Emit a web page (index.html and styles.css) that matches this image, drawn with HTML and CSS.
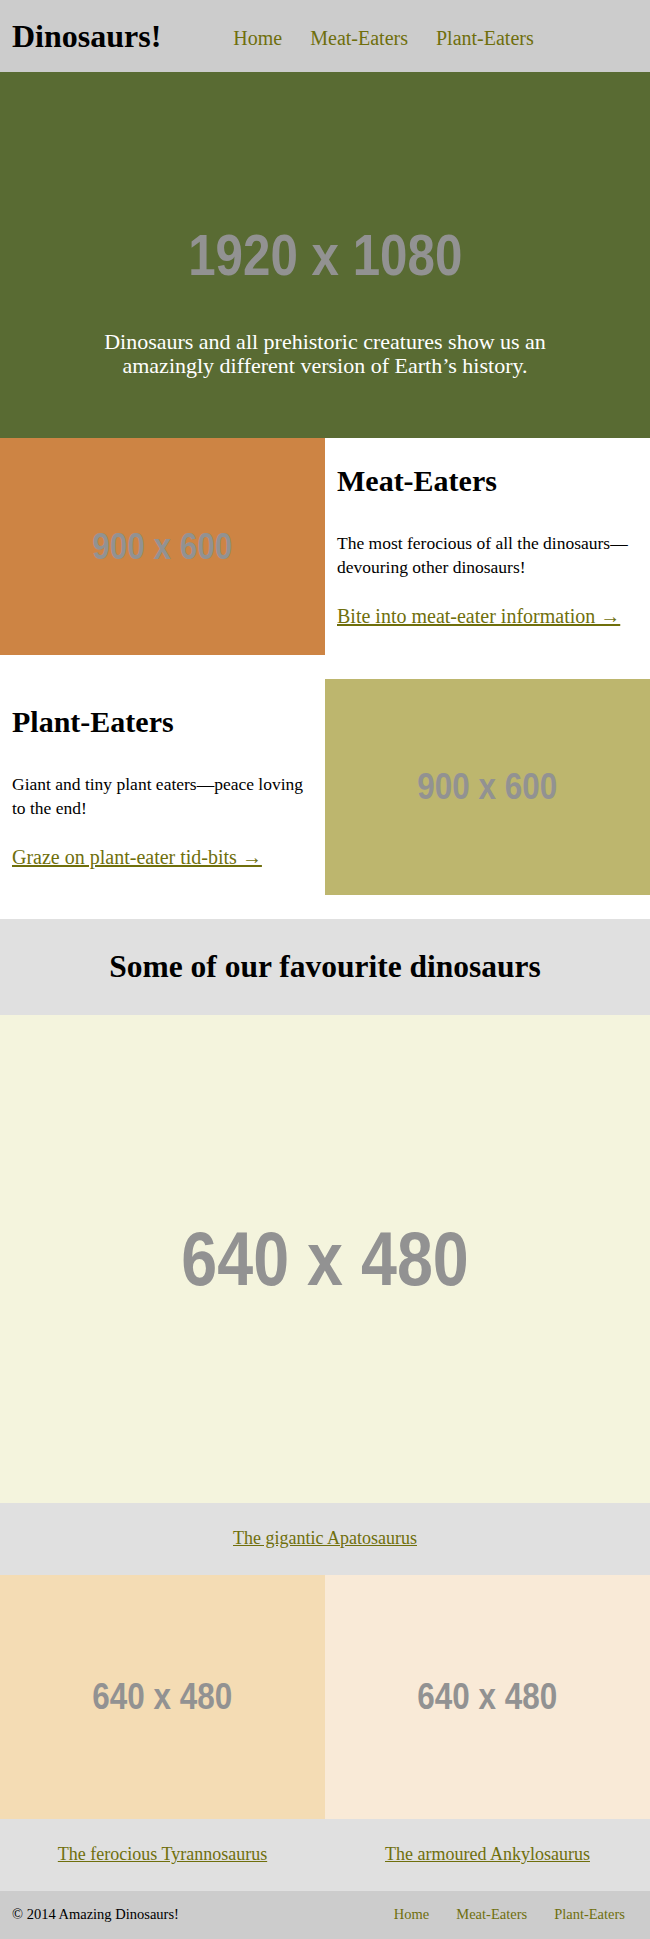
FILE: index.html
```html
<!DOCTYPE html>
<html lang="en">
<head>
<meta charset="utf-8">
<title>Dinosaurs!</title>
<link rel="stylesheet" href="styles.css">
</head>
<body>
<header class="site-header">
  <h1 class="logo">Dinosaurs!</h1>
  <nav class="main-nav">
    <a href="#">Home</a>
    <a href="#">Meat-Eaters</a>
    <a href="#">Plant-Eaters</a>
  </nav>
</header>

<section class="hero">
  <div class="ph ph-hero"><span>1920 x 1080</span></div>
  <p class="hero-caption">Dinosaurs and all prehistoric creatures show us an amazingly different version of Earth’s history.</p>
</section>

<section class="feature">
  <div class="ph ph-feature ph-orange"><span>900 x 600</span></div>
  <div class="feature-text">
    <h2>Meat-Eaters</h2>
    <p>The most ferocious of all the dinosaurs—devouring other dinosaurs!</p>
    <a class="more" href="#">Bite into meat-eater information →</a>
  </div>
</section>

<section class="feature">
  <div class="feature-text">
    <h2>Plant-Eaters</h2>
    <p>Giant and tiny plant eaters—peace loving to the end!</p>
    <a class="more" href="#">Graze on plant-eater tid-bits →</a>
  </div>
  <div class="ph ph-feature ph-khaki"><span>900 x 600</span></div>
</section>

<section class="favourites">
  <h2 class="fav-title">Some of our favourite dinosaurs</h2>
  <figure class="fav fav-big">
    <div class="ph ph-big"><span>640 x 480</span></div>
    <figcaption><a href="#">The gigantic Apatosaurus</a></figcaption>
  </figure>
  <div class="fav-pair">
    <figure class="fav">
      <div class="ph ph-small ph-wheat"><span>640 x 480</span></div>
      <figcaption><a href="#">The ferocious Tyrannosaurus</a></figcaption>
    </figure>
    <figure class="fav">
      <div class="ph ph-small ph-antique"><span>640 x 480</span></div>
      <figcaption><a href="#">The armoured Ankylosaurus</a></figcaption>
    </figure>
  </div>
</section>

<footer class="site-footer">
  <p class="copy">© 2014 Amazing Dinosaurs!</p>
  <nav class="foot-nav">
    <a href="#">Home</a>
    <a href="#">Meat-Eaters</a>
    <a href="#">Plant-Eaters</a>
  </nav>
</footer>
</body>
</html>
```

FILE: styles.css
```css
* { box-sizing: border-box; }

html, body {
  margin: 0;
  padding: 0;
}

body {
  font-family: "Liberation Serif", "Times New Roman", serif;
  color: #000;
  background: #fff;
}

a {
  color: #6f6f0c;
}

/* Header */
.site-header {
  display: flex;
  align-items: center;
  height: 72px;
  padding: 0 12px;
  background: #cccccc;
}

.logo {
  margin: 0;
  font-size: 32px;
  font-weight: bold;
  line-height: 1;
}

.main-nav {
  display: flex;
  gap: 28px;
  margin-left: 72px;
  padding-top: 4px;
}

.main-nav a {
  font-size: 20px;
  text-decoration: none;
}

/* Placeholders */
.ph {
  display: flex;
  align-items: center;
  justify-content: center;
  color: #929292;
  font-family: "Liberation Sans", "Arial", sans-serif;
  font-weight: bold;
  line-height: 1;
}

.ph span {
  display: inline-block;
  transform: scaleX(0.85);
}

/* Hero */
.hero {
  position: relative;
  background: #596b33;
}

.ph-hero {
  height: 366px;
  font-size: 58px;
}

.hero-caption {
  position: absolute;
  left: 0;
  right: 0;
  top: 258px;
  margin: 0 auto;
  width: 470px;
  color: #fff;
  text-align: center;
  font-size: 22px;
  line-height: 24px;
}

/* Features */
.feature {
  display: flex;
  align-items: center;
  margin-bottom: 24px;
}

.ph-feature {
  width: 50%;
  aspect-ratio: 3 / 2;
  font-size: 37px;
}

.ph-orange { background: #cd8444; }
.ph-khaki { background: #bdb66e; }

.feature-text {
  width: 50%;
  padding: 0 12px;
}

.feature-text h2 {
  margin: 0 0 32px;
  font-size: 30px;
  line-height: 36px;
}

.feature-text p {
  margin: 0 0 24px;
  font-size: 17.5px;
  line-height: 24px;
}

.more {
  font-size: 20px;
  line-height: 26px;
}

/* Favourites */
.favourites {
  margin: 0;
}

.fav-title {
  margin: 0;
  height: 96px;
  display: flex;
  align-items: center;
  justify-content: center;
  background: #e0e0e0;
  font-size: 31.5px;
}

.fav {
  margin: 0;
}

.ph-big {
  aspect-ratio: 4 / 3;
  background: #f4f4dd;
  font-size: 76px;
}

.fav figcaption {
  height: 72px;
  display: flex;
  align-items: center;
  justify-content: center;
  background: #e0e0e0;
  font-size: 18px;
}

.fav-pair {
  display: grid;
  grid-template-columns: 1fr 1fr;
}

.ph-small {
  aspect-ratio: 4 / 3;
  font-size: 37px;
}

.ph-wheat { background: #f4dcb4; }
.ph-antique { background: #f9ead7; }

/* Footer */
.site-footer {
  display: flex;
  align-items: center;
  justify-content: space-between;
  height: 48px;
  padding: 0 25px 0 12px;
  background: #cccccc;
}

.copy {
  margin: 0;
  font-size: 14.5px;
}

.foot-nav {
  display: flex;
  gap: 27px;
}

.foot-nav a {
  font-size: 14.5px;
  text-decoration: none;
}
```
